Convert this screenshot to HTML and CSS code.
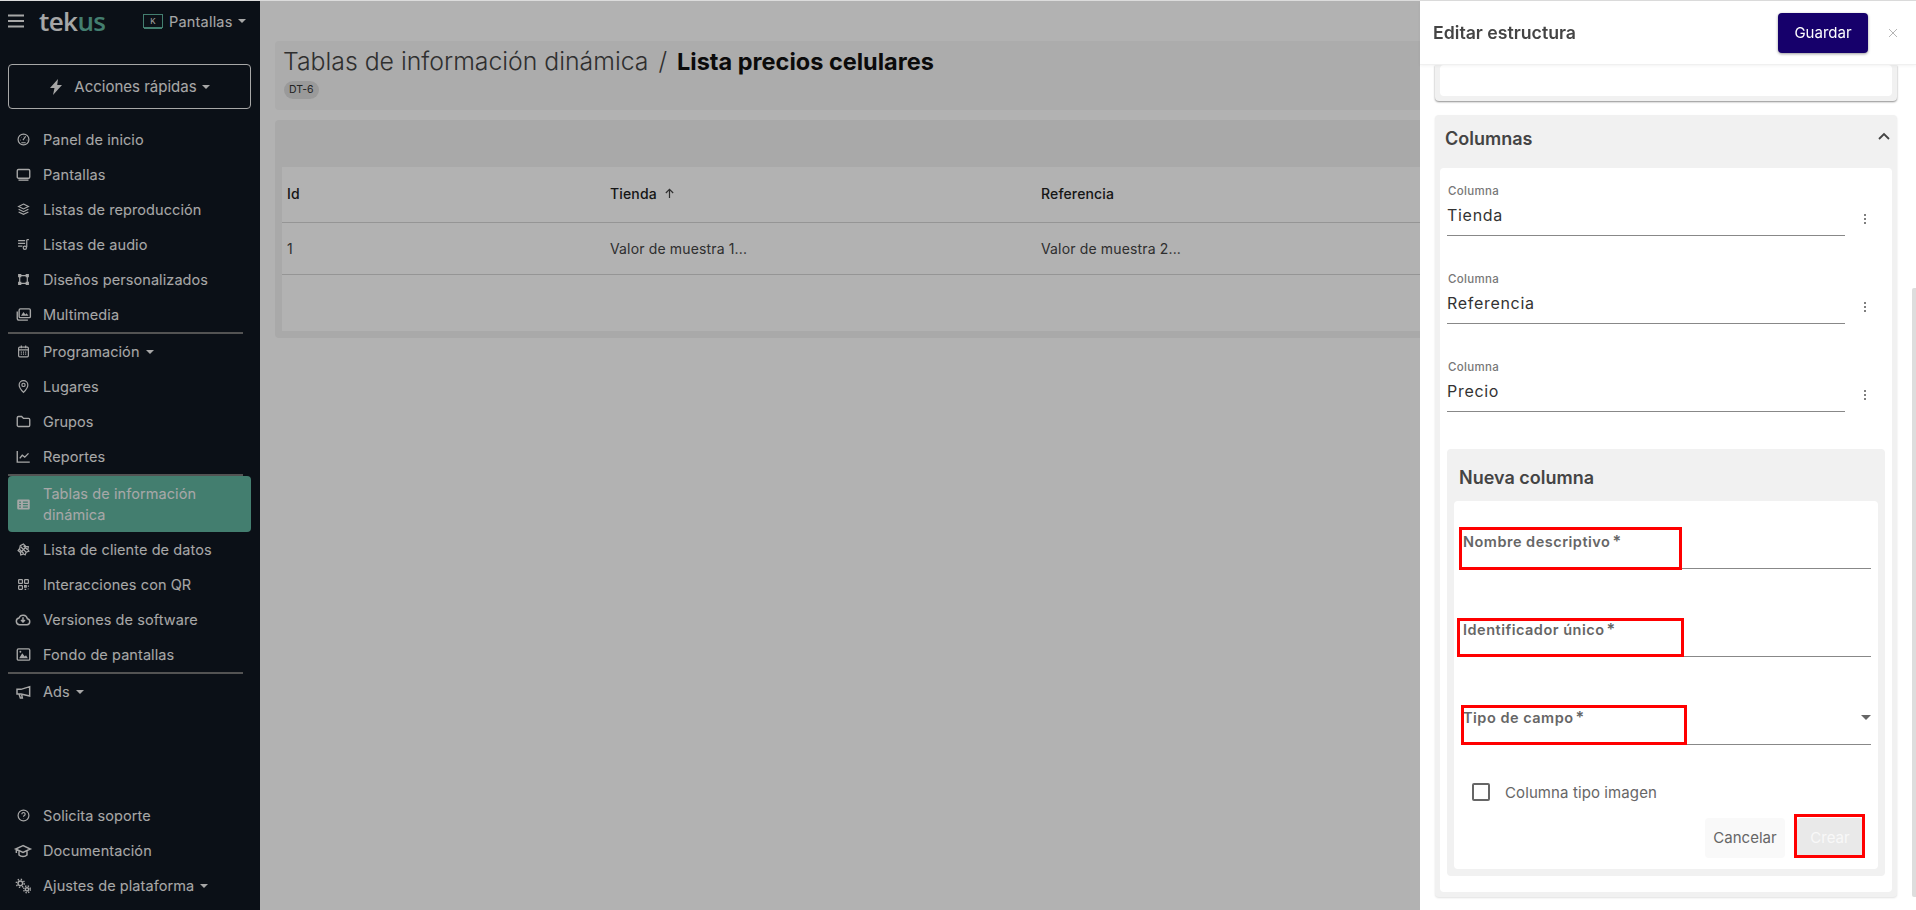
FILE: index.html
```html
<!DOCTYPE html>
<html lang="es">

<head>
    <meta charset="UTF-8">
    <title>Lista precios celulares</title>
    <link rel="stylesheet" href="styles.css">
</head>

<body>
    <!-- Sidebar -->
    <aside class="sidebar">
        <div class="brand-row">
            <svg class="burger" viewBox="0 0 16 14"><path d="M0 1.500h16M0 7h16M0 12.500h16"/></svg>
            <span class="logo">te<span class="logo-k">k</span><span class="logo-us">us</span></span>
            <span class="product">
                <span class="product-icon">K</span>
                Pantallas
                <span class="caret"></span>
            </span>
        </div>

        <button class="quick-btn">
            <svg class="bolt" viewBox="0 0 14 16"><path d="M9 0 1 9h4.500L4 16l9-10H8.200z"/></svg>
            Acciones rápidas
            <span class="caret"></span>
        </button>

        <nav class="nav-main">
            <a class="nav-item"><svg class="ico" viewBox="0 0 24 24"><circle cx="12" cy="12" r="10"/><path d="M11 13l5-7M6 13h1M8 8h.5M12 6h.5M18 13h1M8 18h8"/></svg>Panel de inicio</a>
            <a class="nav-item"><svg class="ico ico-lg" viewBox="0 0 24 24"><rect x="2" y="4" width="20" height="14" rx="2"/><path d="M4 21h16"/></svg>Pantallas</a>
            <a class="nav-item"><svg class="ico" viewBox="0 0 24 24"><path d="M12 2l9 4.500-9 4.500-9-4.500zM3 11.500l9 4.500 9-4.500M3 16.500l9 4.500 9-4.500"/></svg>Listas de reproducción</a>
            <a class="nav-item"><svg class="ico" viewBox="0 0 24 24"><path d="M2 5h13M2 10h13M2 15h8M18 3v14"/><circle cx="14.500" cy="18" r="3"/><path d="M18 3h4"/></svg>Listas de audio</a>
            <a class="nav-item"><svg class="ico" viewBox="0 0 24 24"><path d="M5 5h14v14H5z"/><path class="solid" d="M2 2h6v6H2zM16 2h6v6h-6zM2 16h6v6H2zM16 16h6v6h-6z"/></svg>Diseños personalizados</a>
            <a class="nav-item"><svg class="ico ico-lg" viewBox="0 0 24 24"><rect x="5" y="3" width="18" height="14" rx="2"/><path d="M2 7v11a3 3 0 0 0 3 3h14"/><path class="solid" d="M8 14l4-6 3 4 2-2 3 4z"/></svg>Multimedia</a>
            <div class="divider"></div>

            <a class="nav-item"><svg class="ico" viewBox="0 0 24 24"><rect x="3" y="4" width="18" height="18" rx="2"/><path d="M8 1v5M16 1v5M3 9h18M7 13h2M11 13h2M15 13h2M7 17h2M11 17h2M15 17h2"/></svg>Programación<span class="caret"></span></a>
            <a class="nav-item"><svg class="ico" viewBox="0 0 24 24"><path d="M12 23S4 14.500 4 9a8 8 0 0 1 16 0c0 5.500-8 14-8 14z"/><circle cx="12" cy="9" r="3"/></svg>Lugares</a>
            <a class="nav-item"><svg class="ico ico-lg" viewBox="0 0 24 24"><path d="M2 6a2 2 0 0 1 2-2h5l3 3h8a2 2 0 0 1 2 2v9a2 2 0 0 1-2 2H4a2 2 0 0 1-2-2z"/></svg>Grupos</a>
            <a class="nav-item"><svg class="ico ico-lg" viewBox="0 0 24 24"><path d="M2 3v18h20M6 15l4-5 4 3 6-6"/></svg>Reportes</a>
            <div class="divider"></div>

            <a class="nav-item nav-active"><svg class="ico ico-lg" viewBox="0 0 24 24"><path class="solid" d="M4 4h16a2 2 0 0 1 2 2v12a2 2 0 0 1-2 2H4a2 2 0 0 1-2-2V6a2 2 0 0 1 2-2zm1 3v2h3V7zm6 0v2h8V7zM5 11v2h3v-2zm6 0v2h8v-2zM5 15v2h3v-2zm6 0v2h8v-2z"/></svg>Tablas de información dinámica</a>
            <a class="nav-item"><svg class="ico" viewBox="0 0 24 24"><path d="M12 2l4 4 5 1-1 5 2 3-5 2-2 5-3-2-5 2-1-5-4-3 3-4 1-5zM7 7l10 10M12 5l7 7M5 12l7 7M17 7L7 17"/></svg>Lista de cliente de datos</a>
            <a class="nav-item"><svg class="ico" viewBox="0 0 24 24"><rect x="3" y="3" width="7" height="7" rx="1"/><rect x="14" y="3" width="7" height="7" rx="1"/><rect x="3" y="14" width="7" height="7" rx="1"/><path d="M14 14h3v3h-3zM21 14v2M14 21h3M20 20h1"/></svg>Interacciones con QR</a>
            <a class="nav-item"><svg class="ico ico-xl" viewBox="0 0 24 24"><path d="M7 19a5 5 0 0 1-1-9.900 6.500 6.500 0 0 1 12.500 1A4.500 4.500 0 0 1 18 19z"/><path d="M12 8v7M9 12l3 3 3-3"/></svg>Versiones de software</a>
            <a class="nav-item"><svg class="ico ico-lg" viewBox="0 0 24 24"><rect x="2" y="3" width="20" height="18" rx="2"/><path class="solid" d="M5 18l5-8 4 5 2-2 3 5z"/><circle class="solid" cx="7" cy="7.500" r="1.500"/></svg>Fondo de pantallas</a>
            <div class="divider"></div>

            <a class="nav-item"><svg class="ico ico-xl" viewBox="0 0 24 24"><path d="M22 4v14L9 15H3V8h6zM6 15l2 6h3l-1-5"/></svg>Ads<span class="caret"></span></a>
        </nav>

        <nav class="nav-bottom">
            <a class="nav-item"><svg class="ico" viewBox="0 0 24 24"><circle cx="12" cy="12" r="10"/><path d="M9 9.500a3 3 0 1 1 4.500 2.600c-1 .6-1.500 1.200-1.500 2.400M12 17.500v.5"/></svg>Solicita soporte</a>
            <a class="nav-item"><svg class="ico ico-xl" viewBox="0 0 24 24"><path d="M12 4L1 9l11 5 11-5zM6 12v6c3 3 9 3 12 0v-6M2 9v6"/></svg>Documentación</a>
            <a class="nav-item"><svg class="ico ico-xl" viewBox="0 0 24 24"><circle cx="8" cy="8" r="3.500"/><circle cx="8" cy="8" r="6" stroke-dasharray="2 2.700"/><circle cx="18" cy="17" r="2.500"/><circle cx="18" cy="17" r="5" stroke-dasharray="2 2"/></svg>Ajustes de plataforma<span class="caret"></span></a>
        </nav>
    </aside>

    <!-- Page content -->
    <main class="content">
        <div class="page-head">
            <h1 class="page-title">Tablas de información dinámica <span class="slash">/</span> <b>Lista precios celulares</b></h1>
            <span class="badge">DT-6</span>
        </div>

        <section class="table-card">
            <table>
                <thead>
                    <tr>
                        <th class="col-id">Id</th>
                        <th class="col-store">Tienda <svg class="sort-arrow" viewBox="0 0 12 12"><path d="M6 11V1.500M2 5.500l4-4 4 4"/></svg></th>
                        <th>Referencia</th>
                    </tr>
                </thead>
                <tbody>
                    <tr>
                        <td>1</td>
                        <td>Valor de muestra 1...</td>
                        <td>Valor de muestra 2...</td>
                    </tr>
                </tbody>
            </table>
        </section>
    </main>

    <div class="backdrop"></div>

    <!-- Drawer -->
    <aside class="drawer">
        <header class="drawer-head">
            <h2>Editar estructura</h2>
            <button class="btn-save">Guardar</button>
            <svg class="drawer-close" viewBox="0 0 10 10"><path d="M1 1l8 8M9 1l-8 8"/></svg>
        </header>

        <div class="drawer-body">
            <div class="panel panel-cut">
                <div class="panel-inner"></div>
            </div>

            <div class="panel">
                <div class="panel-head">
                    <h3>Columnas</h3>
                    <svg class="chevron" viewBox="0 0 12 8"><path d="M1 7l5-5 5 5"/></svg>
                </div>
                <div class="panel-inner panel-columns">
                    <div class="col-row">
                        <label class="col-field"><span>Columna</span><input type="text" value="Tienda"></label>
                        <span class="kebab"></span>
                    </div>
                    <div class="col-row">
                        <label class="col-field"><span>Columna</span><input type="text" value="Referencia"></label>
                        <span class="kebab"></span>
                    </div>
                    <div class="col-row">
                        <label class="col-field"><span>Columna</span><input type="text" value="Precio"></label>
                        <span class="kebab"></span>
                    </div>

                    <div class="new-col">
                        <h4>Nueva columna</h4>
                        <form class="new-form" onsubmit="return false;">
                            <div class="form-field">Nombre descriptivo<i class="req">*</i></div>
                            <div class="form-field">Identificador único<i class="req">*</i></div>
                            <div class="form-field form-select">Tipo de campo<i class="req">*</i><span class="select-arrow"></span></div>

                            <label class="check-row"><span class="check-box"></span>Columna tipo imagen</label>

                            <div class="form-actions">
                                <button class="btn-cancel">Cancelar</button>
                                <button class="btn-create">Crear</button>
                            </div>

                            <!-- red marks added on the screenshot -->
                            <span class="mark mark-name"></span>
                            <span class="mark mark-id"></span>
                            <span class="mark mark-type"></span>
                            <span class="mark mark-create"></span>
                        </form>
                    </div>
                </div>
            </div>
        </div>
        <div class="drawer-scroll"></div>
    </aside>
</body>

</html>
```

FILE: styles.css
```css
* {
    box-sizing: border-box;
}

html,
body {
    height: 100%;
}

body {
    display: flex;
    margin: 0;
    overflow: hidden;
    border-top: 1px solid #dcdcdc;
    background-color: #ffffff;
    color: #333333;
    font-family: Inter, "Liberation Sans", sans-serif;
}

h1,
h2,
h3,
h4 {
    margin: 0;
}

button {
    font-family: inherit;
    border: none;
}

.caret {
    display: inline-block;
    margin-left: 5px;
    vertical-align: middle;
    border-top: 4px solid currentColor;
    border-left: 4px solid transparent;
    border-right: 4px solid transparent;
}
/* Sidebar */

.sidebar {
    display: flex;
    flex-direction: column;
    flex: 0 0 260px;
    height: 909px;
    padding-bottom: 7px;
    background-color: #111822;
    color: #f0f0f0;
}

.brand-row {
    display: flex;
    align-items: center;
    height: 40px;
    padding-left: 8px;
}

.burger {
    width: 16px;
    height: 14px;
    fill: none;
    stroke: currentColor;
    stroke-width: 2;
}

.logo {
    margin-left: 15px;
    width: 65px;
    font-family: "Open Sans", sans-serif;
    font-size: 26px;
    line-height: 30px;
    font-weight: 600;
    letter-spacing: -0.6px;
    color: #f0f0f0;
}

.logo-k {
    color: #f0f0f0;
}

.logo-us {
    color: #60b5a0;
}

.product {
    display: flex;
    align-items: center;
    margin-left: 39px;
    font-size: 14.500px;
    letter-spacing: 0.2px;
}

.product-icon {
    display: flex;
    align-items: center;
    justify-content: center;
    width: 20px;
    height: 14px;
    margin-right: 6px;
    border: 1px solid #60b5a0;
    box-shadow: 0 2px 0 -1px #60b5a0;
    font-size: 8px;
}

.quick-btn {
    display: flex;
    align-items: center;
    justify-content: center;
    flex: 0 0 45px;
    margin: 23px 9px 0 8px;
    border: 1px solid #f0f0f0;
    border-radius: 4px;
    background: none;
    color: #f0f0f0;
    font-size: 15px;
}

.bolt {
    width: 14px;
    height: 16px;
    margin-right: 11px;
    fill: currentColor;
}

.nav-main {
    margin-top: 13px;
}

.nav-bottom {
    margin-top: auto;
}

.nav-item {
    display: flex;
    align-items: center;
    height: 35px;
    margin: 0 9px 0 8px;
    padding-left: 9px;
    font-size: 14.500px;
    line-height: 21px;
    letter-spacing: 0.08px;
}

.nav-item .caret {
    margin-left: 6px;
}

.ico {
    flex: 0 0 13px;
    width: 13px;
    height: 13px;
    margin-right: 13px;
    fill: none;
    stroke: currentColor;
    stroke-width: 2.200;
    overflow: visible;
}

.ico-lg {
    flex-basis: 15px;
    width: 15px;
    height: 15px;
    margin-left: -1px;
    margin-right: 12px;
}

.ico-xl {
    flex-basis: 16px;
    width: 16px;
    height: 16px;
    margin-left: -2px;
    margin-right: 12px;
}

.ico .solid {
    fill: currentColor;
    stroke: none;
}

.divider {
    height: 2px;
    margin: 0 17px 0 8px;
    background-color: #777777;
}

.nav-active {
    height: 56px;
    background-color: #60b5a0;
    border-radius: 4px;
}
/* Content */

.content {
    flex: 1;
    min-width: 0;
    padding: 40px 15px 0;
}

.page-head {
    height: 69px;
    padding: 6px 8px;
    border-radius: 4px;
    background-color: #f6f6f6;
}

.page-title {
    font-size: 24.800px;
    line-height: 28px;
    font-weight: 300;
    color: #444444;
}

.page-title b {
    font-size: 23.500px;
    font-weight: 700;
    color: #111111;
}

.slash {
    margin: 0 3px;
    font-weight: 300;
}

.badge {
    display: inline-block;
    margin-top: 5px;
    margin-left: 1px;
    padding: 0 5px;
    height: 18px;
    border-radius: 9px;
    background-color: #dddddd;
    font-size: 10.500px;
    line-height: 18px;
}

.table-card {
    height: 218px;
    margin-top: 10px;
    padding: 47px 7px 7px;
    border-radius: 4px;
    background-color: #f3f3f3;
}

table {
    width: 100%;
    height: 164px;
    border-collapse: collapse;
    table-layout: fixed;
    background-color: #ffffff;
    font-size: 14px;
    letter-spacing: 0.15px;
}

table th,
table td {
    padding: 0 5px;
    text-align: left;
}

table th {
    height: 55px;
    padding-bottom: 2px;
    font-weight: 500;
    color: #222222;
    border-bottom: 1px solid #d6d6d6;
}

table td {
    height: 52px;
    color: #444444;
    border-bottom: 1px solid #d6d6d6;
}

table tbody::after {
    content: "";
    display: table-row;
}

.col-id {
    width: 323px;
}

.col-store {
    width: 431px;
}

.sort-arrow {
    width: 11px;
    height: 11px;
    margin-left: 3px;
    fill: none;
    stroke: #444444;
    stroke-width: 1.300;
}

.backdrop {
    position: fixed;
    top: 1px;
    right: 0;
    bottom: 0;
    left: 0;
    background-color: rgba(0, 0, 0, 0.3);
}
/* Drawer */

.drawer {
    position: fixed;
    top: 1px;
    right: 0;
    bottom: 0;
    width: 496px;
    display: flex;
    flex-direction: column;
    background-color: #ffffff;
}

.drawer-head {
    display: flex;
    align-items: center;
    flex: 0 0 64px;
    padding: 0 18px 0 13px;
    border-bottom: 1px solid #f0f0f0;
    box-shadow: 0 1px 3px rgba(0, 0, 0, 0.05);
    position: relative;
}

.drawer-head h2 {
    flex: 1;
    font-size: 17.700px;
    font-weight: 600;
    color: #444444;
}

.btn-save {
    width: 90px;
    height: 40px;
    margin-right: 20px;
    border-radius: 4px;
    background-color: #16006b;
    box-shadow: 0 1px 3px rgba(0, 0, 0, 0.4);
    color: #ffffff;
    font-size: 15px;
}

.drawer-close {
    width: 10px;
    height: 10px;
    fill: none;
    stroke: #b5b5b5;
    stroke-width: 1;
}

.drawer-body {
    flex: 1;
    min-height: 0;
    overflow: hidden;
    padding: 0 19px 0 15px;
}

.panel {
    border-radius: 4px;
    background-color: #f1f1f1;
    box-shadow: 0 1px 2px rgba(0, 0, 0, 0.12);
}

.panel-cut {
    height: 36px;
    margin-bottom: 14px;
    padding: 0 5px 5px;
    border-radius: 0 0 4px 4px;
    box-shadow: 0 1px 2px rgba(0, 0, 0, 0.45);
}

.panel-cut .panel-inner {
    height: 100%;
}

.panel-inner {
    border-radius: 4px;
    background-color: #ffffff;
}

.panel-head {
    display: flex;
    justify-content: space-between;
    height: 53px;
    padding: 14px 7px 0 10px;
}

.panel-head h3 {
    font-size: 18px;
    line-height: 20px;
    font-weight: 600;
    color: #444444;
}

.chevron {
    width: 12px;
    height: 8px;
    margin-top: 3px;
    fill: none;
    stroke: #444444;
    stroke-width: 1.800;
}

.panel-columns {
    margin: 0 5px;
    padding: 16px 7px 16px;
}

.panel:last-child {
    padding-bottom: 5px;
}

.col-row {
    display: flex;
    margin-bottom: 36px;
}

.col-field {
    display: block;
    width: 398px;
    border-bottom: 1px solid #888888;
}

.col-field span {
    display: block;
    height: 14px;
    padding-left: 1px;
    font-size: 11.500px;
    line-height: 14px;
    font-weight: 500;
    letter-spacing: 0.3px;
    color: #777777;
}

.col-field input {
    display: block;
    width: 100%;
    height: 32px;
    margin-top: 5px;
    padding: 0 0 9px;
    border: none;
    outline: none;
    font-family: inherit;
    font-size: 16px;
    letter-spacing: 0.7px;
    color: #333333;
}

.kebab {
    position: relative;
    width: 2px;
    height: 2px;
    margin: 34px 0 0 19px;
    border-radius: 50%;
    background-color: #555555;
    box-shadow: 0 -4px 0 #555555, 0 4px 0 #555555;
}

.new-col {
    margin-top: 37px;
    padding: 0 7px 7px;
    border-radius: 4px;
    background-color: #f1f1f1;
}

.new-col h4 {
    height: 52px;
    padding: 19px 0 0 5px;
    font-size: 18px;
    line-height: 20px;
    font-weight: 600;
    color: #444444;
}

.new-form {
    position: relative;
    height: 368px;
    padding: 32px 7px 0;
    border-radius: 4px;
    background-color: #ffffff;
}

.form-field {
    position: relative;
    height: 36px;
    margin-bottom: 52px;
    padding-left: 2px;
    border-bottom: 1px solid #888888;
    font-size: 14.500px;
    line-height: 18px;
    font-weight: 600;
    letter-spacing: 0.5px;
    color: #666666;
}

.req {
    margin-left: 2px;
    font-style: normal;
    font-size: 16px;
    line-height: 0;
}

.select-arrow {
    position: absolute;
    right: 0;
    top: 6px;
    border-top: 5px solid #666666;
    border-left: 5px solid transparent;
    border-right: 5px solid transparent;
}

.check-row {
    display: flex;
    align-items: center;
    height: 24px;
    margin-top: -17px;
    padding-left: 11px;
    font-size: 15px;
    letter-spacing: 0.1px;
    color: #666666;
}

.check-box {
    width: 18px;
    height: 18px;
    margin-right: 15px;
    border: 2px solid #666666;
    border-radius: 2px;
}

.form-actions {
    display: flex;
    justify-content: flex-end;
    gap: 12px;
    margin-top: 14px;
    padding-right: 8px;
}

.form-actions button {
    height: 40px;
    padding-bottom: 3px;
    border-radius: 4px;
    font-size: 15px;
}

.btn-cancel {
    width: 80px;
    background-color: #f9f9f9;
    color: #666666;
}

.btn-create {
    width: 66px;
    background-color: #e9e9e9;
    color: #f8f8f8;
}

.mark {
    position: absolute;
    border: 3px solid #ff0000;
}

.mark-name {
    left: 5px;
    top: 26px;
    width: 223px;
    height: 43px;
}

.mark-id {
    left: 3px;
    top: 117px;
    width: 227px;
    height: 39px;
}

.mark-type {
    left: 7px;
    top: 204px;
    width: 226px;
    height: 40px;
}

.mark-create {
    left: 340px;
    top: 313px;
    width: 71px;
    height: 44px;
}

.drawer-scroll {
    position: absolute;
    top: 287px;
    right: 0;
    width: 4px;
    height: 609px;
    border-radius: 2px 0 0 2px;
    background-color: #dddddd;
}
```
